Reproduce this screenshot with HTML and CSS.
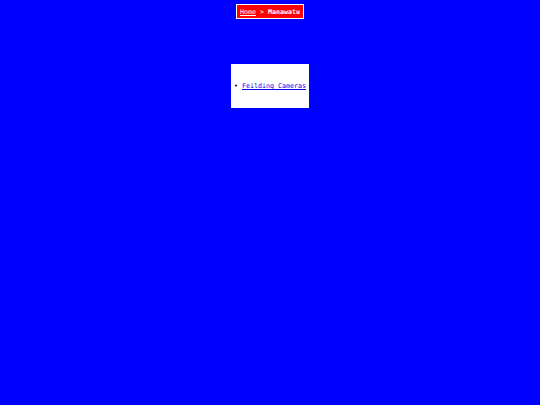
FILE: index.html
```html
<!DOCTYPE html>
<html>
<head>
<meta charset="utf-8">
<link rel="stylesheet" href="styles.css">
</head>
<body>
<div class="top">
  <div class="crumb"><a href="#" class="home">Home</a> &gt; <b>Manawatu</b></div>
</div>
<div class="box">
  <ul class="list">
    <li><a href="#">Feilding Cameras</a></li>
  </ul>
</div>
</body>
</html>
```
FILE: styles.css
```css
html, body {
  margin: 0;
  padding: 0;
  background: #0000ff;
  height: 100%;
}
body {
  font-family: "DejaVu Sans Mono", monospace;
  font-size: 6.65px;
}
.top {
  display: flex;
  justify-content: center;
  padding-top: 4px;
}
.crumb {
  background: #ff0000;
  color: #ffffff;
  border: 1px solid #ffffff;
  width: 66px;
  height: 13px;
  box-sizing: content-box;
  display: flex;
  align-items: center;
  justify-content: center;
  white-space: pre;
}
.crumb b { font-weight: bold; }
.home { color: #ffffff; }
.box {
  width: 78px;
  height: 44px;
  margin: 45px auto 0;
  background: #ffffff;
  display: flex;
  align-items: center;
}
.list {
  margin: 0;
  padding: 0 0 0 3px;
  list-style: none;
}
.list li::before {
  content: "\2022";
  display: inline-block;
  width: 4px;
  margin-right: 4px;
  text-align: center;
  color: #000000;
}
.list a { color: #0000ee; }
```
